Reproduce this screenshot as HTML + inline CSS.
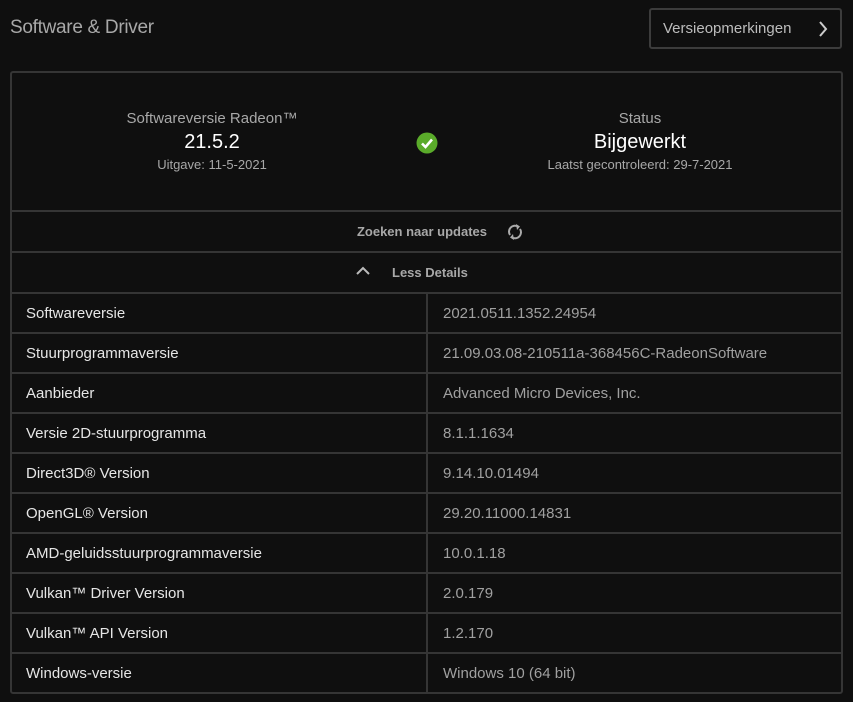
<!DOCTYPE html>
<html><head><style>
body{margin:0;background:#0f0f0f;width:853px;height:702px;overflow:hidden;font-family:"Liberation Sans",sans-serif;position:relative}
.t{position:absolute;left:10px;top:17px;font-size:19px;color:#a8a8a8;letter-spacing:-0.3px}
.btn{position:absolute;left:649px;top:8px;width:189px;height:37px;border:2px solid #3c3c3c;border-radius:3px;color:#bdbdbd;font-size:15px;box-sizing:content-box}
.btn span{position:absolute;left:12px;top:10px}
.panel{position:absolute;left:10px;top:71px;width:829px;height:619px;border:2px solid #353535;border-radius:3px}
.c{position:absolute;text-align:center;color:#a8a8a8}
.row{position:absolute;left:0;width:829px;border-top:2px solid #353535;box-sizing:border-box}
.tr{position:absolute;left:0;width:829px;height:40px;border-top:2px solid #353535;box-sizing:border-box}
.tr .k{position:absolute;left:14px;top:11px;font-size:15px;color:#e6e6e6}
.tr .v{position:absolute;left:431px;top:11px;font-size:15px;color:#a0a0a0}
.div{position:absolute;left:414px;top:220px;width:2px;height:399px;background:#353535}
</style></head><body>
<div class="t">Software &amp; Driver</div>
<div class="btn"><span>Versieopmerkingen</span>
<svg style="position:absolute;left:167px;top:11px" width="10" height="16"><path d="M2 1 L8 8 L2 15" stroke="#ccc" stroke-width="2" fill="none"/></svg></div>
<div class="panel">
<div class="c" style="left:100px;width:200px;top:37px;font-size:15px">Softwareversie Radeon™</div>
<div class="c" style="left:100px;width:200px;top:58px;font-size:20px;color:#fff">21.5.2</div>
<div class="c" style="left:100px;width:200px;top:84px;font-size:13px">Uitgave: 11-5-2021</div>
<svg style="position:absolute;left:404px;top:59px" width="22" height="22"><circle cx="11" cy="11" r="10.5" fill="#5aab2a"/><path d="M6 11.5 L9.5 15 L16 7.5" stroke="#fff" stroke-width="2.6" fill="none"/></svg>
<div class="c" style="left:528px;width:200px;top:37px;font-size:15px">Status</div>
<div class="c" style="left:528px;width:200px;top:58px;font-size:20px;color:#fff">Bijgewerkt</div>
<div class="c" style="left:508px;width:240px;top:84px;font-size:13px">Laatst gecontroleerd: 29-7-2021</div>
<div class="row" style="top:137px;height:41px">
<div class="c" style="left:340px;width:140px;top:12px;font-size:13px;font-weight:bold;color:#a8a8a8">Zoeken naar updates</div>
<svg style="position:absolute;left:495px;top:10px" width="16" height="20"><path d="M3 13 A6 6 0 0 1 11 4.5 M13 7 A6 6 0 0 1 5 15.5" stroke="#aaa" stroke-width="2" fill="none"/><path d="M9 2 L13 4.5 L10 8 Z M7 18 L3 15.5 L6 12 Z" fill="#aaa"/></svg></div>
<div class="row" style="top:178px;height:41px">
<svg style="position:absolute;left:344px;top:13px" width="14" height="10"><path d="M1 8 L7 2 L13 8" stroke="#bbb" stroke-width="2" fill="none"/></svg>
<div class="c" style="width:100px;top:12px;font-size:13px;font-weight:bold;color:#a8a8a8;text-align:left;left:380px">Less Details</div></div>
<div class="tr" style="top:219px"><span class="k">Softwareversie</span><span class="v">2021.0511.1352.24954</span></div>
<div class="tr" style="top:259px"><span class="k">Stuurprogrammaversie</span><span class="v">21.09.03.08-210511a-368456C-RadeonSoftware</span></div>
<div class="tr" style="top:299px"><span class="k">Aanbieder</span><span class="v">Advanced Micro Devices, Inc.</span></div>
<div class="tr" style="top:339px"><span class="k">Versie 2D-stuurprogramma</span><span class="v">8.1.1.1634</span></div>
<div class="tr" style="top:379px"><span class="k">Direct3D® Version</span><span class="v">9.14.10.01494</span></div>
<div class="tr" style="top:419px"><span class="k">OpenGL® Version</span><span class="v">29.20.11000.14831</span></div>
<div class="tr" style="top:459px"><span class="k">AMD-geluidsstuurprogrammaversie</span><span class="v">10.0.1.18</span></div>
<div class="tr" style="top:499px"><span class="k">Vulkan™ Driver Version</span><span class="v">2.0.179</span></div>
<div class="tr" style="top:539px"><span class="k">Vulkan™ API Version</span><span class="v">1.2.170</span></div>
<div class="tr" style="top:579px"><span class="k">Windows-versie</span><span class="v">Windows 10 (64 bit)</span></div>
<div class="div"></div>
</div>
</body></html>
